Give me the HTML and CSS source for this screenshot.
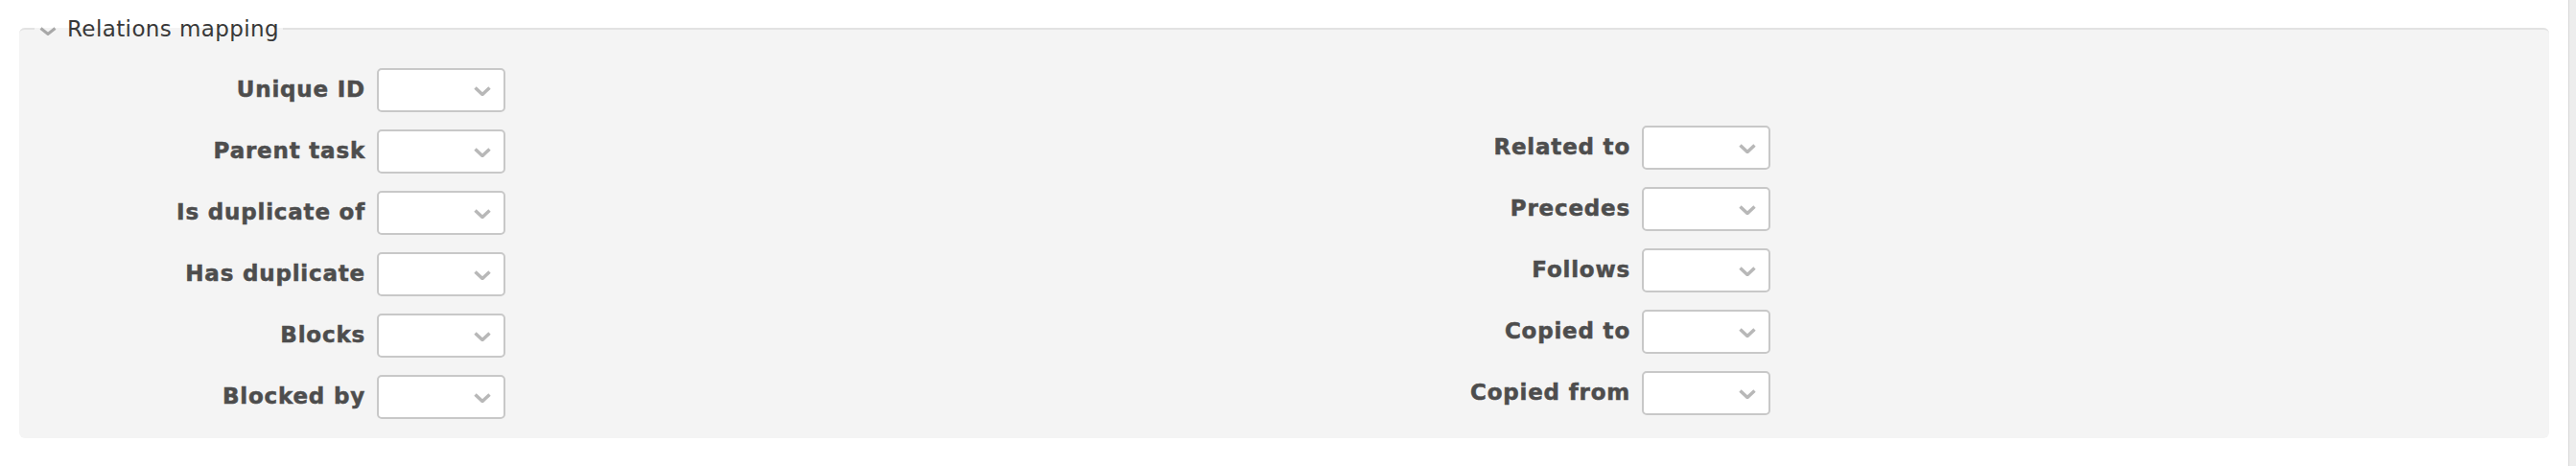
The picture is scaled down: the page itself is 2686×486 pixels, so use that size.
FILE: index.html
```html
<!DOCTYPE html>
<html>
	<head>
		<meta charset="UTF-8">
		<title>Relations mapping</title>
		<link rel="stylesheet" href="styles.css">
	</head>

	<body>
		<div class="page">
			<div class="content">
				<fieldset class="group">
					<legend>
						<svg class="caret" width="18" height="9" viewBox="0 0 18 9"><polyline points="1.5,1.5 9,7.5 16.5,1.5" /></svg>Relations mapping
					</legend>
					<div class="cols">
						<!-- left column -->
						<div class="col">
							<div class="row"><label>Unique ID</label><span class="select"><svg width="18" height="10" viewBox="0 0 18 10"><polyline points="1.5,1.5 9,8.5 16.5,1.5" /></svg></span></div>
							<div class="row"><label>Parent task</label><span class="select"><svg width="18" height="10" viewBox="0 0 18 10"><polyline points="1.5,1.5 9,8.5 16.5,1.5" /></svg></span></div>
							<div class="row"><label>Is duplicate of</label><span class="select"><svg width="18" height="10" viewBox="0 0 18 10"><polyline points="1.5,1.5 9,8.5 16.5,1.5" /></svg></span></div>
							<div class="row"><label>Has duplicate</label><span class="select"><svg width="18" height="10" viewBox="0 0 18 10"><polyline points="1.5,1.5 9,8.5 16.5,1.5" /></svg></span></div>
							<div class="row"><label>Blocks</label><span class="select"><svg width="18" height="10" viewBox="0 0 18 10"><polyline points="1.5,1.5 9,8.5 16.5,1.5" /></svg></span></div>
							<div class="row"><label>Blocked by</label><span class="select"><svg width="18" height="10" viewBox="0 0 18 10"><polyline points="1.5,1.5 9,8.5 16.5,1.5" /></svg></span></div>
						</div>
						<!-- right column -->
						<div class="col col-right">
							<div class="row"><label>Related to</label><span class="select"><svg width="18" height="10" viewBox="0 0 18 10"><polyline points="1.5,1.5 9,8.5 16.5,1.5" /></svg></span></div>
							<div class="row"><label>Precedes</label><span class="select"><svg width="18" height="10" viewBox="0 0 18 10"><polyline points="1.5,1.5 9,8.5 16.5,1.5" /></svg></span></div>
							<div class="row"><label>Follows</label><span class="select"><svg width="18" height="10" viewBox="0 0 18 10"><polyline points="1.5,1.5 9,8.5 16.5,1.5" /></svg></span></div>
							<div class="row"><label>Copied to</label><span class="select"><svg width="18" height="10" viewBox="0 0 18 10"><polyline points="1.5,1.5 9,8.5 16.5,1.5" /></svg></span></div>
							<div class="row"><label>Copied from</label><span class="select"><svg width="18" height="10" viewBox="0 0 18 10"><polyline points="1.5,1.5 9,8.5 16.5,1.5" /></svg></span></div>
						</div>
					</div>
				</fieldset>
			</div>
			<div class="track"></div>
		</div>
	</body>

</html>
```

FILE: styles.css
```css
/* fieldset with two columns of label + select rows */
body {
	margin: 0;
	background-color: #fff;
	font-family: "DejaVu Sans", Verdana, sans-serif;
}

.page {
	display: flex;
	min-height: 100vh;
}

.content {
	flex: 1;
	padding: 16px 20px 0;
}

.track {
	width: 7px;
	background-color: #ededed;
	border-left: 1px solid #d8d8d8;
}

.group {
	margin: 0;
	padding: 0 0 20px;
	min-width: 0;
	border: none;
	border-top: 2px solid #e2e2e2;
	border-radius: 6px;
	background-color: #f4f4f4;
}

.group legend {
	margin-left: 16px;
	padding: 0 4px 0 5px;
	font-size: 23px;
	line-height: 28px;
	color: #383838;
	letter-spacing: 0.4px;
}

.caret {
	margin-right: 11px;
	vertical-align: 1px;
}

.caret polyline {
	fill: none;
	stroke: #a8a8a8;
	stroke-width: 3;
}

.cols {
	display: grid;
	grid-template-columns: 1fr 1fr;
	padding-top: 27px;
}

.col {
	display: flex;
	flex-direction: column;
	gap: 18px;
}

.col-right {
	padding-top: 60px;
}

.row {
	display: flex;
	align-items: center;
	gap: 12px;
}

.row label {
	width: 361px;
	padding-bottom: 3px;
	text-align: right;
	font-size: 23px;
	font-weight: bold;
	color: #4d4d4d;
	letter-spacing: 0.8px;
	-webkit-text-stroke: 0.5px #4d4d4d;
}

.select {
	display: flex;
	align-items: center;
	justify-content: flex-end;
	width: 134px;
	height: 46px;
	box-sizing: border-box;
	padding: 2px 13px 0 0;
	background-color: #fff;
	border: 2px solid #c8c8c8;
	border-radius: 5px;
}

.select polyline {
	fill: none;
	stroke: #b8b8b8;
	stroke-width: 3.5;
}
```
